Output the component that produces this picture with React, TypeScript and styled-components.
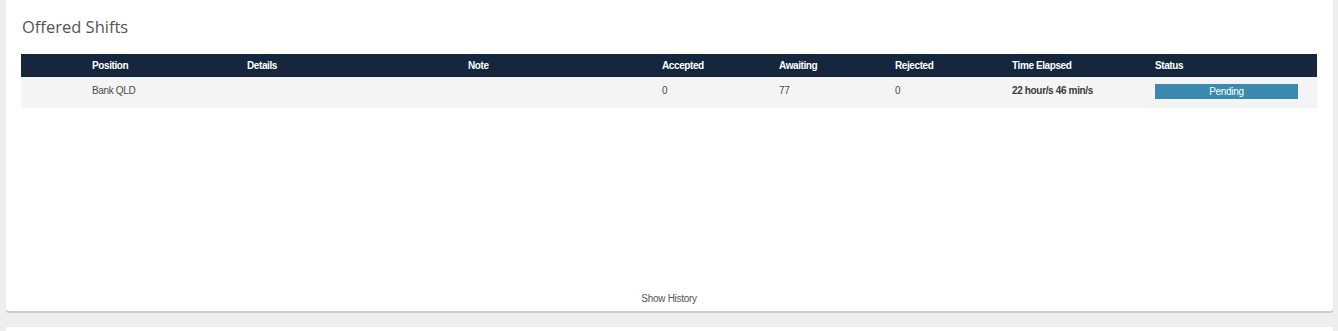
import React from 'react';
import styled, { createGlobalStyle } from 'styled-components';

const GlobalStyle = createGlobalStyle`
  html, body {
    margin: 0;
    padding: 0;
    background: #eeeeee;
  }
  body {
    font-family: "Liberation Sans", Arial, sans-serif;
  }
`;

const Page = styled.div`
  width: 1338px;
  height: 331px;
  padding: 0 5px 0 6px;
  box-sizing: border-box;
  overflow: hidden;
`;

const Card = styled.div`
  background: #ffffff;
  border-radius: 0 0 3px 3px;
  box-shadow: 0 2px 0 #cccccc;
  height: 311px;
  box-sizing: border-box;
  padding: 15px 16px 0 15px;
  display: flex;
  flex-direction: column;
`;

const NextCard = styled.div`
  background: #ffffff;
  margin-top: 16px;
  height: 20px;
`;

const Title = styled.h2`
  margin: 0 0 15px 1px;
  font-family: "Open Sans", sans-serif;
  font-weight: 400;
  font-size: 16.5px;
  line-height: 24px;
  color: #555555;
`;

const COLS = '63px 155px 221px 194px 117px 116px 117px 143px 170px';

const HeaderRow = styled.div`
  display: grid;
  grid-template-columns: ${COLS};
  background: #15263d;
  height: 23px;
  align-items: center;
`;

const HeadCell = styled.div`
  padding-left: 8px;
  color: #ffffff;
  font-weight: 700;
  font-size: 10px;
  letter-spacing: -0.4px;
`;

const BodyRow = styled.div`
  display: grid;
  grid-template-columns: ${COLS};
  background: #f4f4f4;
  height: 31px;
  align-items: start;
  padding-top: 7px;
  box-sizing: border-box;
`;

const Cell = styled.div<{ $strong?: boolean }>`
  padding-left: 8px;
  color: ${(p) => (p.$strong ? '#3a3a3a' : '#4a4a4a')};
  font-weight: ${(p) => (p.$strong ? 700 : 400)};
  font-size: 10px;
  line-height: 14px;
  letter-spacing: -0.35px;
`;

const StatusBadge = styled.div`
  width: 143px;
  height: 15px;
  background: #3b89ad;
  color: #ffffff;
  font-size: 10px;
  line-height: 15px;
  text-align: center;
  letter-spacing: -0.3px;
`;

const Spacer = styled.div`
  flex: 1;
`;

const HistoryLink = styled.div`
  text-align: center;
  font-size: 10px;
  color: #555555;
  letter-spacing: -0.3px;
  padding-bottom: 7px;
  cursor: pointer;
`;

const headers = ['', 'Position', 'Details', 'Note', 'Accepted', 'Awaiting', 'Rejected', 'Time Elapsed', 'Status'];

export default function App() {
  return (
    <Page>
      <GlobalStyle />
      <Card>
        <Title>Offered Shifts</Title>
        <HeaderRow>
          {headers.map((h, i) => (
            <HeadCell key={i}>{h}</HeadCell>
          ))}
        </HeaderRow>
        <BodyRow>
          <Cell />
          <Cell>Bank QLD</Cell>
          <Cell />
          <Cell />
          <Cell>0</Cell>
          <Cell>77</Cell>
          <Cell>0</Cell>
          <Cell $strong>22 hour/s 46 min/s</Cell>
          <Cell>
            <StatusBadge>Pending</StatusBadge>
          </Cell>
        </BodyRow>
        <Spacer />
        <HistoryLink>Show History</HistoryLink>
      </Card>
      <NextCard />
    </Page>
  );
}
